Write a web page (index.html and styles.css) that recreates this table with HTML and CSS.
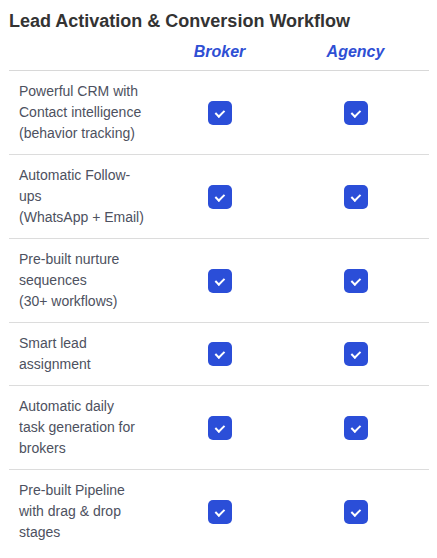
FILE: index.html
```html
<!DOCTYPE html>
<html>
<head>
<meta charset="utf-8">
<link rel="stylesheet" href="styles.css">
</head>
<body>
<div class="wrap">
  <h2 class="title">Lead Activation &amp; Conversion Workflow</h2>
  <table class="cmp">
    <colgroup><col class="c1"><col class="c2"><col class="c3"></colgroup>
    <thead>
      <tr><th></th><th>Broker</th><th>Agency</th></tr>
    </thead>
    <tbody>
      <tr><td class="feat">Powerful CRM with<br>Contact intelligence<br>(behavior tracking)</td><td><span class="chk"></span></td><td><span class="chk"></span></td></tr>
      <tr><td class="feat">Automatic Follow-<br>ups<br>(WhatsApp + Email)</td><td><span class="chk"></span></td><td><span class="chk"></span></td></tr>
      <tr><td class="feat">Pre-built nurture<br>sequences<br>(30+ workflows)</td><td><span class="chk"></span></td><td><span class="chk"></span></td></tr>
      <tr><td class="feat">Smart lead<br>assignment</td><td><span class="chk"></span></td><td><span class="chk"></span></td></tr>
      <tr><td class="feat">Automatic daily<br>task generation for<br>brokers</td><td><span class="chk"></span></td><td><span class="chk"></span></td></tr>
      <tr><td class="feat">Pre-built Pipeline<br>with drag &amp; drop<br>stages</td><td><span class="chk"></span></td><td><span class="chk"></span></td></tr>
    </tbody>
  </table>
</div>
</body>
</html>
```
FILE: styles.css
```css
html, body { margin: 0; padding: 0; background: #fff; }
body { font-family: "Liberation Sans", Arial, sans-serif; }
.wrap { padding: 8px 8px 0 9px; }
.title {
  margin: 0;
  font-size: 18px;
  font-weight: bold;
  color: #333;
  line-height: 26px;
}
.cmp {
  width: 420px;
  border-collapse: collapse;
  table-layout: fixed;
}
.c1 { width: 148px; }
.c2 { width: 125px; }
.c3 { width: 147px; }
.cmp th {
  font-size: 16px;
  font-style: italic;
  font-weight: bold;
  color: #2f4fd4;
  height: 36px;
  padding: 0;
  text-align: center;
  vertical-align: middle;
  border-bottom: 1px solid #d8d8d8;
}
.cmp td {
  padding: 10px 0;
  border-bottom: 1px solid #dcdcdc;
  text-align: center;
  vertical-align: middle;
}
.cmp tbody tr:last-child td { border-bottom: none; }
.cmp td.feat {
  text-align: left;
  padding: 10px 4px 10px 10px;
  font-size: 14px;
  line-height: 21px;
  color: #4d5160;
  white-space: nowrap;
}
.chk {
  display: inline-block;
  width: 24px;
  height: 24px;
  border-radius: 5px;
  background: #2b4ed8;
  position: relative;
  vertical-align: middle;
}
.chk::after {
  content: "";
  position: absolute;
  left: 9px;
  top: 7px;
  width: 3.5px;
  height: 7px;
  border: solid #fff;
  border-width: 0 2.5px 2.5px 0;
  transform: rotate(45deg);
}
```
